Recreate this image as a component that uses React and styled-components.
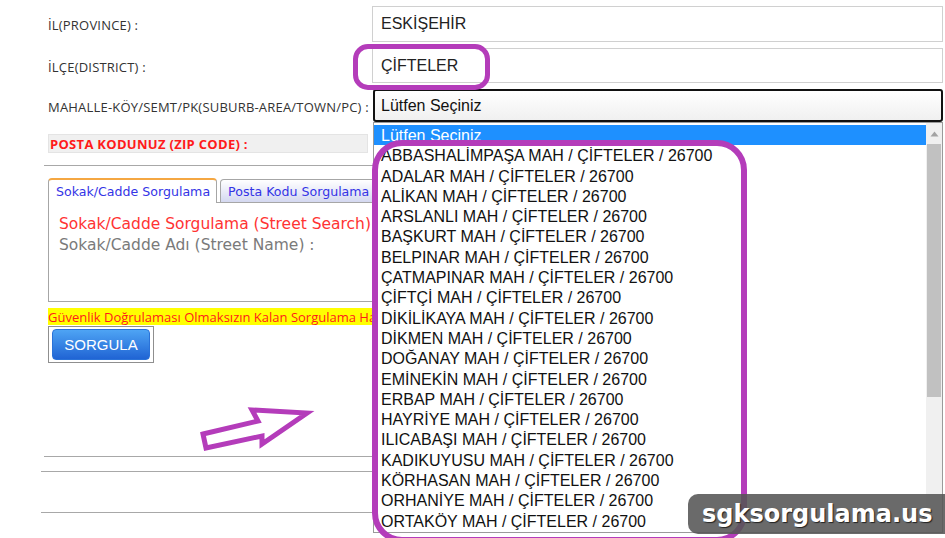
import React from 'react';
import styled, { createGlobalStyle } from 'styled-components';

const GlobalStyle = createGlobalStyle`
  html, body {
    margin: 0;
    padding: 0;
    background: #ffffff;
    overflow: hidden;
  }
  body {
    width: 945px;
    height: 538px;
    font-family: "Open Sans", "Liberation Sans", sans-serif;
  }
`;

const purple = '#b43cba';

const Page = styled.div`
  position: relative;
  width: 945px;
  height: 538px;
  overflow: hidden;
  padding: 6px 0 0 48px;
  box-sizing: border-box;
`;

const FormGrid = styled.div`
  display: grid;
  grid-template-columns: 324px 571px;
  grid-template-rows: 36px 35px 33px;
  row-gap: 6px;
  align-items: center;
`;

const Label = styled.div`
  font-family: "Open Sans", sans-serif;
  font-size: 13px;
  color: #333;
  white-space: nowrap;
  letter-spacing: 0.2px;
  padding-top: 2px;
`;

const TextInput = styled.div`
  height: 100%;
  box-sizing: border-box;
  border: 1px solid #d0d0d0;
  display: flex;
  align-items: center;
  padding-left: 8px;
  font-family: "Liberation Sans", Arial, sans-serif;
  font-size: 16px;
  color: #222;
`;

const SelectWrap = styled.div`
  position: relative;
  height: 100%;
`;

const SelectBox = styled.div`
  height: 100%;
  box-sizing: border-box;
  margin-left: 1px;
  border: 2px solid #111;
  border-radius: 3px;
  background: linear-gradient(#ffffff, #f0f0f0);
  display: flex;
  align-items: center;
  padding-left: 6px;
  font-family: "Liberation Sans", Arial, sans-serif;
  font-size: 16px;
  color: #111;
`;

const OptionList = styled.div`
  position: absolute;
  top: 100%;
  left: 1px;
  right: 0;
  height: 411px;
  box-sizing: border-box;
  border: 1px solid #9a9a9a;
  background: #fff;
  display: flex;
  z-index: 5;
`;

const Options = styled.div`
  flex: 1;
  overflow: hidden;
  padding-top: 2px;
`;

const Option = styled.div`
  height: 20.3px;
  line-height: 21px;
  padding-left: 7px;
  font-family: "Liberation Sans", Arial, sans-serif;
  font-size: 16px;
  white-space: nowrap;
  color: ${p => (p.$selected ? '#fff' : '#111')};
  background: ${p => (p.$selected ? '#1e90ff' : 'transparent')};
`;

const ScrollTrack = styled.div`
  width: 16px;
  background: #f0f0f0;
  display: flex;
  flex-direction: column;
  align-items: center;
`;

const ScrollArrow = styled.div`
  height: 21px;
  display: flex;
  align-items: center;
  justify-content: center;
`;

const ScrollThumb = styled.div`
  width: 14px;
  height: 253px;
  background: #c1c1c1;
`;

const ZipRow = styled.div`
  margin-top: 12px;
  width: 320px;
  height: 19px;
  box-sizing: border-box;
  background: #f0f0f0;
  border: 1px solid #e4e4e4;
  display: flex;
  align-items: center;
  padding-left: 1px;
  font-family: "Open Sans", sans-serif;
  font-size: 13px;
  font-weight: 700;
  color: #ff1a1a;
  letter-spacing: 0.3px;
  white-space: nowrap;
`;

const Divider = styled.div`
  margin: ${p => p.$top}px 0 0 ${p => p.$left}px;
  width: 420px;
  height: 1px;
  background: #a8a8a8;
`;

const TabBar = styled.div`
  margin-top: 11px;
  display: flex;
  align-items: flex-end;
  gap: 3px;
  height: 25px;
`;

const Tab = styled.div`
  height: ${p => (p.$active ? 25 : 23)}px;
  box-sizing: border-box;
  padding: 0 6px 0 7px;
  display: flex;
  align-items: center;
  font-family: "DejaVu Sans", Verdana, sans-serif;
  font-size: 12.6px;
  color: #3434e6;
  white-space: nowrap;
  border: 1px solid #a6a6a6;
  border-bottom: none;
  border-top: ${p => (p.$active ? '2px solid #f5a742' : '1px solid #a6a6a6')};
  border-radius: 4px 4px 0 0;
  background: ${p => (p.$active ? '#fff' : 'linear-gradient(#ffffff, #d4d8f0)')};
  position: relative;
  z-index: 1;
  margin-bottom: ${p => (p.$active ? -1 : 0)}px;
`;

const Panel = styled.div`
  width: 420px;
  height: 100px;
  box-sizing: border-box;
  border: 1px solid #a6a6a6;
  padding: 11px 0 0 10px;
  font-family: "DejaVu Sans", Verdana, sans-serif;
  font-size: 15.5px;
  line-height: 21px;
`;

const PanelTitle = styled.div`
  color: #ff3333;
  white-space: nowrap;
`;

const PanelField = styled.div`
  color: #7a7a7a;
  white-space: nowrap;
`;

const Warning = styled.div`
  margin-top: 6px;
  width: 324px;
  height: 17px;
  background: #ffff00;
  display: flex;
  align-items: center;
  font-family: "Open Sans", sans-serif;
  font-size: 13px;
  color: #ff1a1a;
  white-space: nowrap;
  overflow: hidden;
`;

const ButtonFrame = styled.div`
  margin-top: 1px;
  width: 106px;
  height: 37px;
  box-sizing: border-box;
  border: 1px solid #8f8f8f;
  padding: 2px 3px;
`;

const QueryButton = styled.div`
  height: 100%;
  box-sizing: border-box;
  border: 1px solid #2a72d8;
  border-radius: 4px;
  background: linear-gradient(#4ea4f4, #2064d4);
  display: flex;
  align-items: center;
  justify-content: center;
  font-family: "Liberation Sans", Arial, sans-serif;
  font-size: 15px;
  color: #fff;
`;

const Highlight = styled.div`
  position: absolute;
  left: ${p => p.$x}px;
  top: ${p => p.$y}px;
  width: ${p => p.$w}px;
  height: ${p => p.$h}px;
  box-sizing: border-box;
  border: ${p => p.$stroke}px solid ${purple};
  border-radius: ${p => p.$r}px;
  z-index: 10;
  pointer-events: none;
`;

const ArrowMark = styled.svg`
  position: absolute;
  left: 0;
  top: 0;
  z-index: 10;
`;

const Watermark = styled.div`
  position: absolute;
  left: 688px;
  top: 494px;
  width: 260px;
  height: 40px;
  border-radius: 10px 0 0 10px;
  background: rgba(85, 85, 85, 0.88);
  display: flex;
  align-items: center;
  padding-left: 14px;
  box-sizing: border-box;
  font-family: "DejaVu Sans", Verdana, sans-serif;
  font-weight: 700;
  font-size: 24px;
  color: #fff;
  text-shadow: 1px 1px 1px #222;
  z-index: 20;
`;

const neighbourhoods = [
  'ABBASHALİMPAŞA',
  'ADALAR',
  'ALİKAN',
  'ARSLANLI',
  'BAŞKURT',
  'BELPINAR',
  'ÇATMAPINAR',
  'ÇİFTÇİ',
  'DİKİLİKAYA',
  'DİKMEN',
  'DOĞANAY',
  'EMİNEKİN',
  'ERBAP',
  'HAYRİYE',
  'ILICABAŞI',
  'KADIKUYUSU',
  'KÖRHASAN',
  'ORHANİYE',
  'ORTAKÖY',
];

export default function App() {
  return (
    <>
      <GlobalStyle />
      <Page>
        <FormGrid>
          <Label>İL(PROVINCE) :</Label>
          <TextInput>ESKİŞEHİR</TextInput>
          <Label>İLÇE(DISTRICT) :</Label>
          <TextInput>ÇİFTELER</TextInput>
          <Label>MAHALLE-KÖY/SEMT/PK(SUBURB-AREA/TOWN/PC) :</Label>
          <SelectWrap>
            <SelectBox>Lütfen Seçiniz</SelectBox>
            <OptionList>
              <Options>
                <Option $selected>Lütfen Seçiniz</Option>
                {neighbourhoods.map(n => (
                  <Option key={n}>{n} MAH / ÇİFTELER / 26700</Option>
                ))}
              </Options>
              <ScrollTrack>
                <ScrollArrow>
                  <svg width="9" height="6" viewBox="0 0 9 6">
                    <path d="M4.5 0.5 L8.5 5.5 L0.5 5.5 Z" fill="#a3a3a3" />
                  </svg>
                </ScrollArrow>
                <ScrollThumb />
              </ScrollTrack>
            </OptionList>
          </SelectWrap>
        </FormGrid>

        <ZipRow>POSTA KODUNUZ (ZIP CODE) :</ZipRow>
        <Divider $top={12} $left={-4} />

        <TabBar>
          <Tab $active>Sokak/Cadde Sorgulama</Tab>
          <Tab>Posta Kodu Sorgulama</Tab>
        </TabBar>
        <Panel>
          <PanelTitle>Sokak/Cadde Sorgulama (Street Search)</PanelTitle>
          <PanelField>Sokak/Cadde Adı (Street Name) :</PanelField>
        </Panel>

        <Warning>Güvenlik Doğrulaması Olmaksızın Kalan Sorgulama Hakkınız</Warning>
        <ButtonFrame>
          <QueryButton>SORGULA</QueryButton>
        </ButtonFrame>

        <Divider $top={93} $left={-4} />
        <Divider $top={14} $left={-7} />
        <Divider $top={40} $left={-7} />

        <Highlight $x={353} $y={44} $w={137} $h={46} $stroke={5} $r={15} />
        <Highlight $x={372} $y={140} $w={375} $h={403} $stroke={6} $r={30} />

        <ArrowMark width="945" height="538" viewBox="0 0 945 538">
          <polygon
            points="203,434 258,421 252,410 307,413 262,444 262,436 206,448"
            fill="none"
            stroke={purple}
            strokeWidth="5"
            strokeLinejoin="miter"
          />
        </ArrowMark>

        <Watermark>sgksorgulama.us</Watermark>
      </Page>
    </>
  );
}
